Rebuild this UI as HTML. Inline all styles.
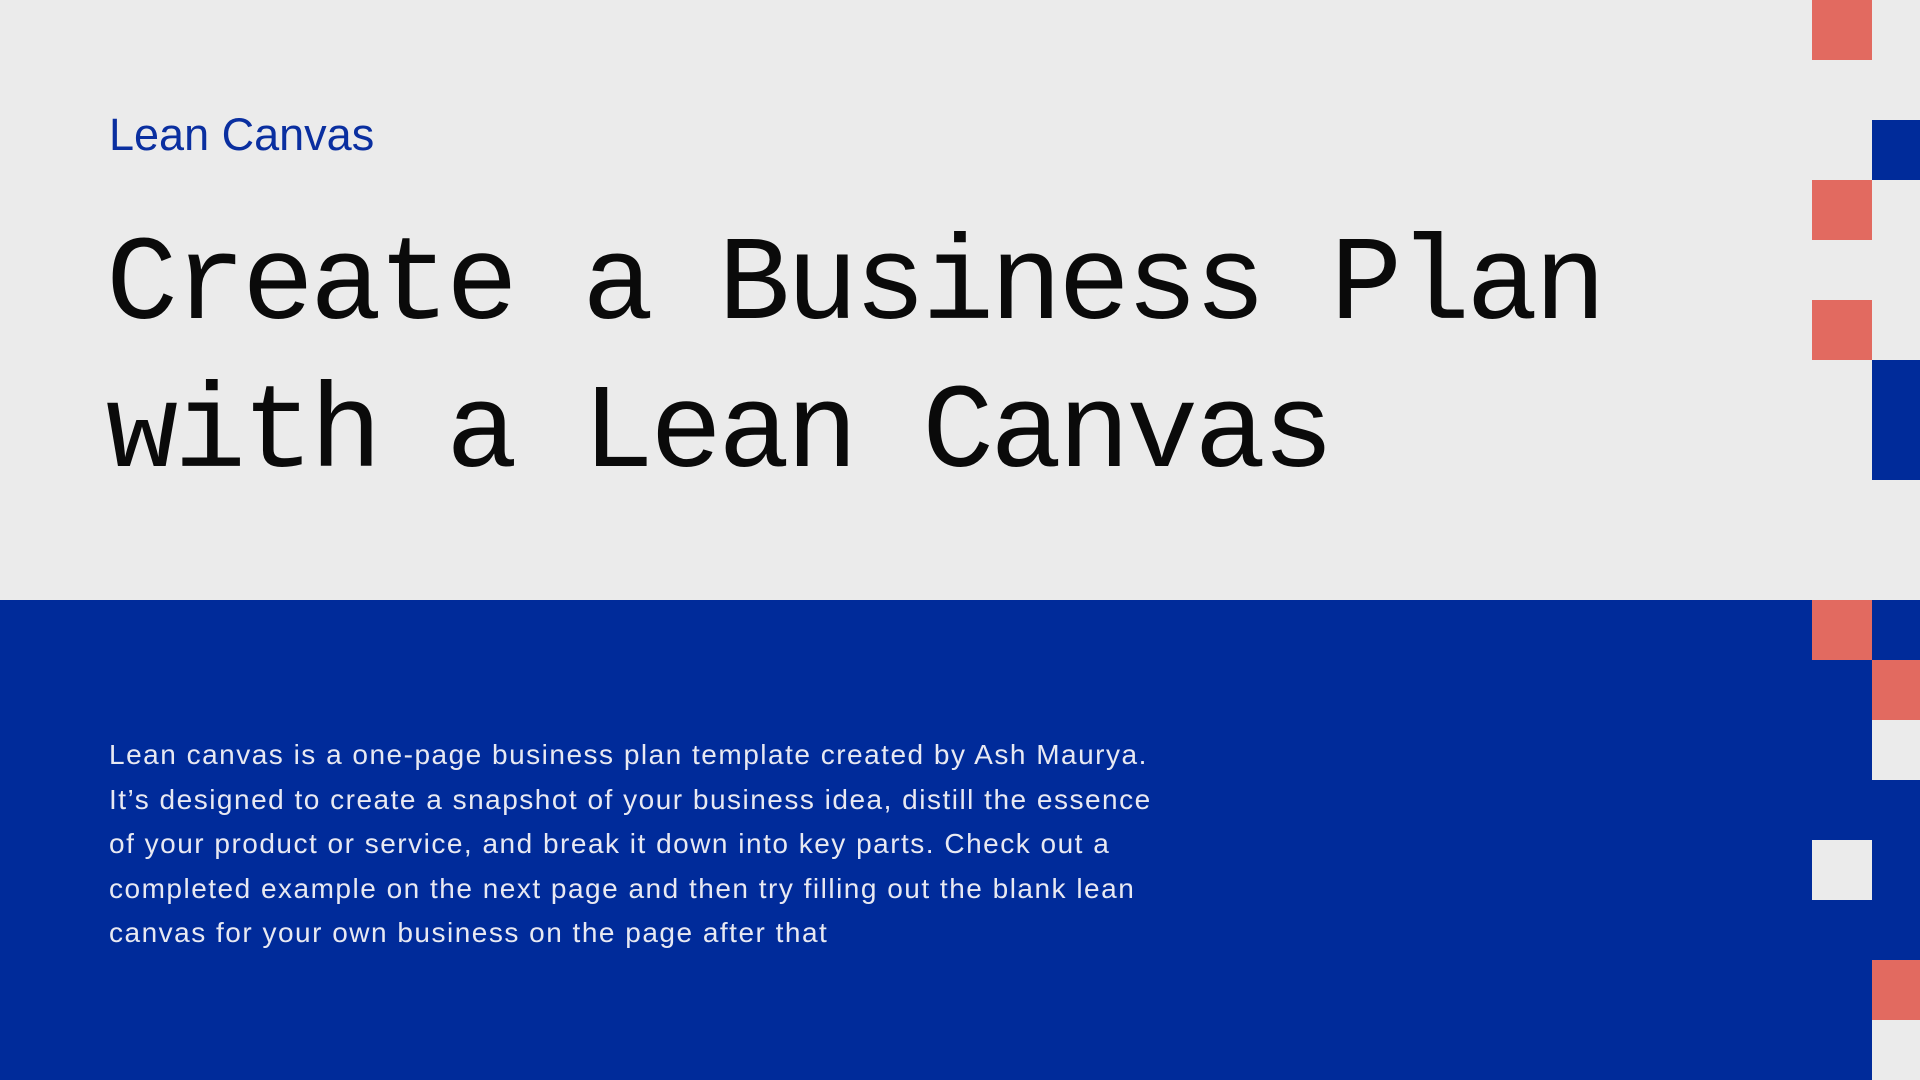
<!DOCTYPE html>
<html><head><style>
body{margin:0;width:1920px;height:1080px;position:relative;overflow:hidden;background:#ebebeb;font-family:"Liberation Sans",sans-serif}
.b{position:absolute;left:0;top:600px;width:1920px;height:480px;background:#002b9a}
.s{position:absolute}
.c{background:#e26a60}.u{background:#002b9a}.l{background:#ebebeb}
h2{position:absolute;left:109px;top:107px;margin:0;font-weight:normal;font-size:45px;color:#0a2fa0;line-height:56px}
h1{position:absolute;left:106px;top:213px;margin:0;font-family:"Liberation Mono",monospace;font-weight:normal;font-size:120px;letter-spacing:-4px;line-height:148px;color:#0a0a0a}
p{position:absolute;left:109px;top:733px;width:1200px;margin:0;font-size:28px;letter-spacing:1.5px;line-height:44.5px;color:#e8e9f2}
</style></head><body>
<div class="b"></div>
<div class="s c" style="left:1812px;top:0;width:60px;height:60px"></div>
<div class="s u" style="left:1872px;top:120px;width:48px;height:60px"></div>
<div class="s c" style="left:1812px;top:180px;width:60px;height:60px"></div>
<div class="s c" style="left:1812px;top:300px;width:60px;height:60px"></div>
<div class="s u" style="left:1872px;top:360px;width:48px;height:120px"></div>
<div class="s c" style="left:1812px;top:600px;width:60px;height:60px"></div>
<div class="s c" style="left:1872px;top:660px;width:48px;height:60px"></div>
<div class="s l" style="left:1872px;top:720px;width:48px;height:60px"></div>
<div class="s l" style="left:1812px;top:840px;width:60px;height:60px"></div>
<div class="s c" style="left:1872px;top:960px;width:48px;height:60px"></div>
<div class="s l" style="left:1872px;top:1020px;width:48px;height:60px"></div>
<h2>Lean Canvas</h2>
<h1>Create a Business Plan<br>with a Lean Canvas</h1>
<p>Lean canvas is a one-page business plan template created by Ash Maurya.<br>It’s designed to create a snapshot of your business idea, distill the essence<br>of your product or service, and break it down into key parts. Check out a<br>completed example on the next page and then try filling out the blank lean<br>canvas for your own business on the page after that</p>
</body></html>
